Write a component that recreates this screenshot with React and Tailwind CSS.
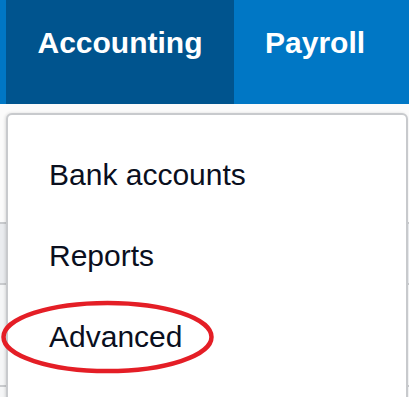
import React from "react";

export default function App() {
  return (
    <div
      className="relative w-[409px] h-[397px] overflow-hidden bg-white"
      style={{ fontFamily: '"Liberation Sans", Arial, sans-serif' }}
    >
      {/* Top navigation bar */}
      <div className="flex h-[104px] bg-[#0077c5] pl-[6px]">
        <div className="flex w-[228px] justify-center bg-[#00548e] pt-[26px] text-[30px] font-bold leading-[34px] text-white">
          Accounting
        </div>
        <div className="px-[31px] pt-[26px] text-[30px] font-bold leading-[34px] text-white">
          Payroll
        </div>
      </div>

      {/* Page content behind the menu (table rows) */}
      <div className="flex flex-col">
        <div className="h-[120px] bg-[#fbfbfb] border-b-2 border-[#c9cbce]"></div>
        <div className="h-[61px] bg-[#eaecef] border-b-2 border-[#c9cbce]"></div>
        <div className="h-[102px] bg-[#f5f6f7] border-b-2 border-[#c9cbce]"></div>
        <div className="h-[10px] bg-[#f5f6f7]"></div>
      </div>

      {/* Dropdown menu overlay */}
      <div className="absolute left-[6px] right-[1px] top-[113px] h-[300px] rounded-[6px] border-2 border-[#c8cacd] bg-white pt-[19px] pl-[41px] shadow-[-1px_0_3px_rgba(0,0,0,0.12)]">
        <div className="h-[81px] text-[30px] leading-[81px] text-[#0a0f1e]">Bank accounts</div>
        <div className="h-[81px] text-[30px] leading-[81px] text-[#0a0f1e]">Reports</div>
        <div className="h-[81px] text-[30px] leading-[81px] text-[#0a0f1e]">Advanced</div>
      </div>

      {/* Red annotation ellipse */}
      <svg
        className="absolute left-0 top-0 pointer-events-none"
        width="409"
        height="397"
        viewBox="0 0 409 397"
      >
        <ellipse cx="107.5" cy="337" rx="104" ry="34" fill="none" stroke="#e41e26" strokeWidth="4.5" />
      </svg>
    </div>
  );
}
